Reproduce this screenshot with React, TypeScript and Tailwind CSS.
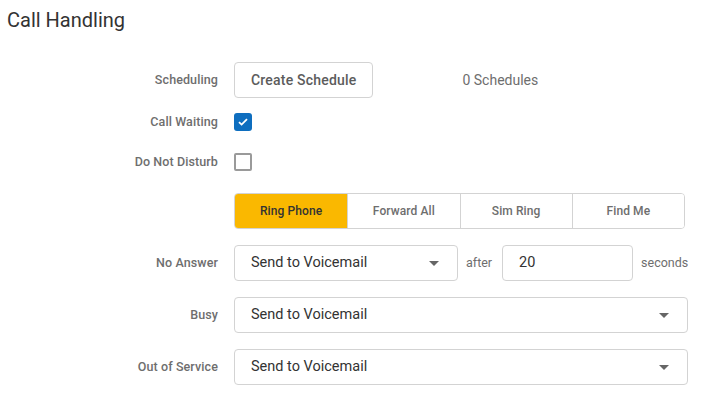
import { useState } from 'react'

const Caret = () => (
  <svg width="10" height="5" viewBox="0 0 10 5" className="shrink-0">
    <path d="M0 0h10L5 5z" fill="#666" />
  </svg>
)

const Label = ({ children }: { children: React.ReactNode }) => (
  <div className="w-[218px] shrink-0 text-right text-[12.5px] font-medium tracking-[0.1px] text-[#6e6e6e]">
    {children}
  </div>
)

const Select = ({ value, className }: { value: string; className: string }) => (
  <div
    className={`flex h-9 items-center justify-between rounded-[4px] border border-[#d3d3d3] bg-white pl-4 pr-[18px] text-[14.5px] text-[#333] ${className}`}
  >
    <span>{value}</span>
    <Caret />
  </div>
)

export default function App() {
  const [callWaiting, setCallWaiting] = useState(true)
  const [dnd, setDnd] = useState(false)
  const [mode, setMode] = useState('Ring Phone')

  const modes = ['Ring Phone', 'Forward All', 'Sim Ring', 'Find Me']

  return (
    <div className="h-[398px] w-[702px] bg-white pl-[7px] pt-[6px] font-['Roboto',sans-serif]">
      {/* Header */}
      <h1 className="text-[20px] leading-[28px] text-[#333]">Call Handling</h1>

      <div className="-ml-[7px]">
        {/* Scheduling */}
        <div className="mt-[28px] flex h-9 items-center">
          <Label>Scheduling</Label>
          <button className="ml-4 flex h-9 items-center rounded-[4px] border border-[#d3d3d3] px-4 text-[14px] font-medium tracking-[0.2px] text-[#5c5c5c]">
            Create Schedule
          </button>
          <span className="ml-[89px] text-[14px] text-[#6e6e6e]">0 Schedules</span>
        </div>

        {/* Call Waiting */}
        <div className="mt-[15px] flex h-[18px] items-center">
          <Label>Call Waiting</Label>
          <button
            onClick={() => setCallWaiting(!callWaiting)}
            className={
              callWaiting
                ? 'ml-4 flex h-[18px] w-[18px] items-center justify-center rounded-[3px] bg-[#0e6ebf]'
                : 'ml-4 h-[18px] w-[18px] rounded-[2px] border-2 border-[#9a9a9a]'
            }
          >
            {callWaiting && (
              <svg width="10" height="8" viewBox="0 0 10 8">
                <path d="M1 4.2l2.6 2.4L9 1.2" fill="none" stroke="#fff" strokeWidth="1.8" />
              </svg>
            )}
          </button>
        </div>

        {/* Do Not Disturb */}
        <div className="mt-[22px] flex h-[18px] items-center">
          <Label>Do Not Disturb</Label>
          <button
            onClick={() => setDnd(!dnd)}
            className={
              dnd
                ? 'ml-4 h-[18px] w-[18px] rounded-[3px] bg-[#0e6ebf]'
                : 'ml-4 h-[18px] w-[18px] rounded-[2px] border-2 border-[#9a9a9a]'
            }
          />
        </div>

        {/* Mode tabs */}
        <div className="mt-[22px] flex h-9 items-center">
          <div className="w-[218px] shrink-0" />
          <div className="ml-4 grid h-9 w-[451px] grid-cols-4 overflow-hidden rounded-[4px] border border-[#d3d3d3]">
            {modes.map((m, i) => (
              <button
                key={m}
                onClick={() => setMode(m)}
                className={`text-[12px] font-medium tracking-[0.1px] ${
                  mode === m ? 'bg-[#fab800] text-[#333]' : 'bg-white text-[#6e6e6e]'
                } ${i > 0 ? 'border-l border-[#d3d3d3]' : ''}`}
              >
                {m}
              </button>
            ))}
          </div>
        </div>

        {/* No Answer */}
        <div className="mt-4 flex h-9 items-center">
          <Label>No Answer</Label>
          <Select value="Send to Voicemail" className="ml-4 w-[224px]" />
          <span className="ml-2 text-[12.5px] text-[#6e6e6e]">after</span>
          <div className="ml-[10px] flex h-9 w-[131px] items-center rounded-[4px] border border-[#d3d3d3] pl-4 text-[14.5px] text-[#333]">
            20
          </div>
          <span className="ml-2 text-[12.5px] text-[#6e6e6e]">seconds</span>
        </div>

        {/* Busy */}
        <div className="mt-4 flex h-9 items-center">
          <Label>Busy</Label>
          <Select value="Send to Voicemail" className="ml-4 w-[454px]" />
        </div>

        {/* Out of Service */}
        <div className="mt-4 flex h-9 items-center">
          <Label>Out of Service</Label>
          <Select value="Send to Voicemail" className="ml-4 w-[454px]" />
        </div>
      </div>
    </div>
  )
}
